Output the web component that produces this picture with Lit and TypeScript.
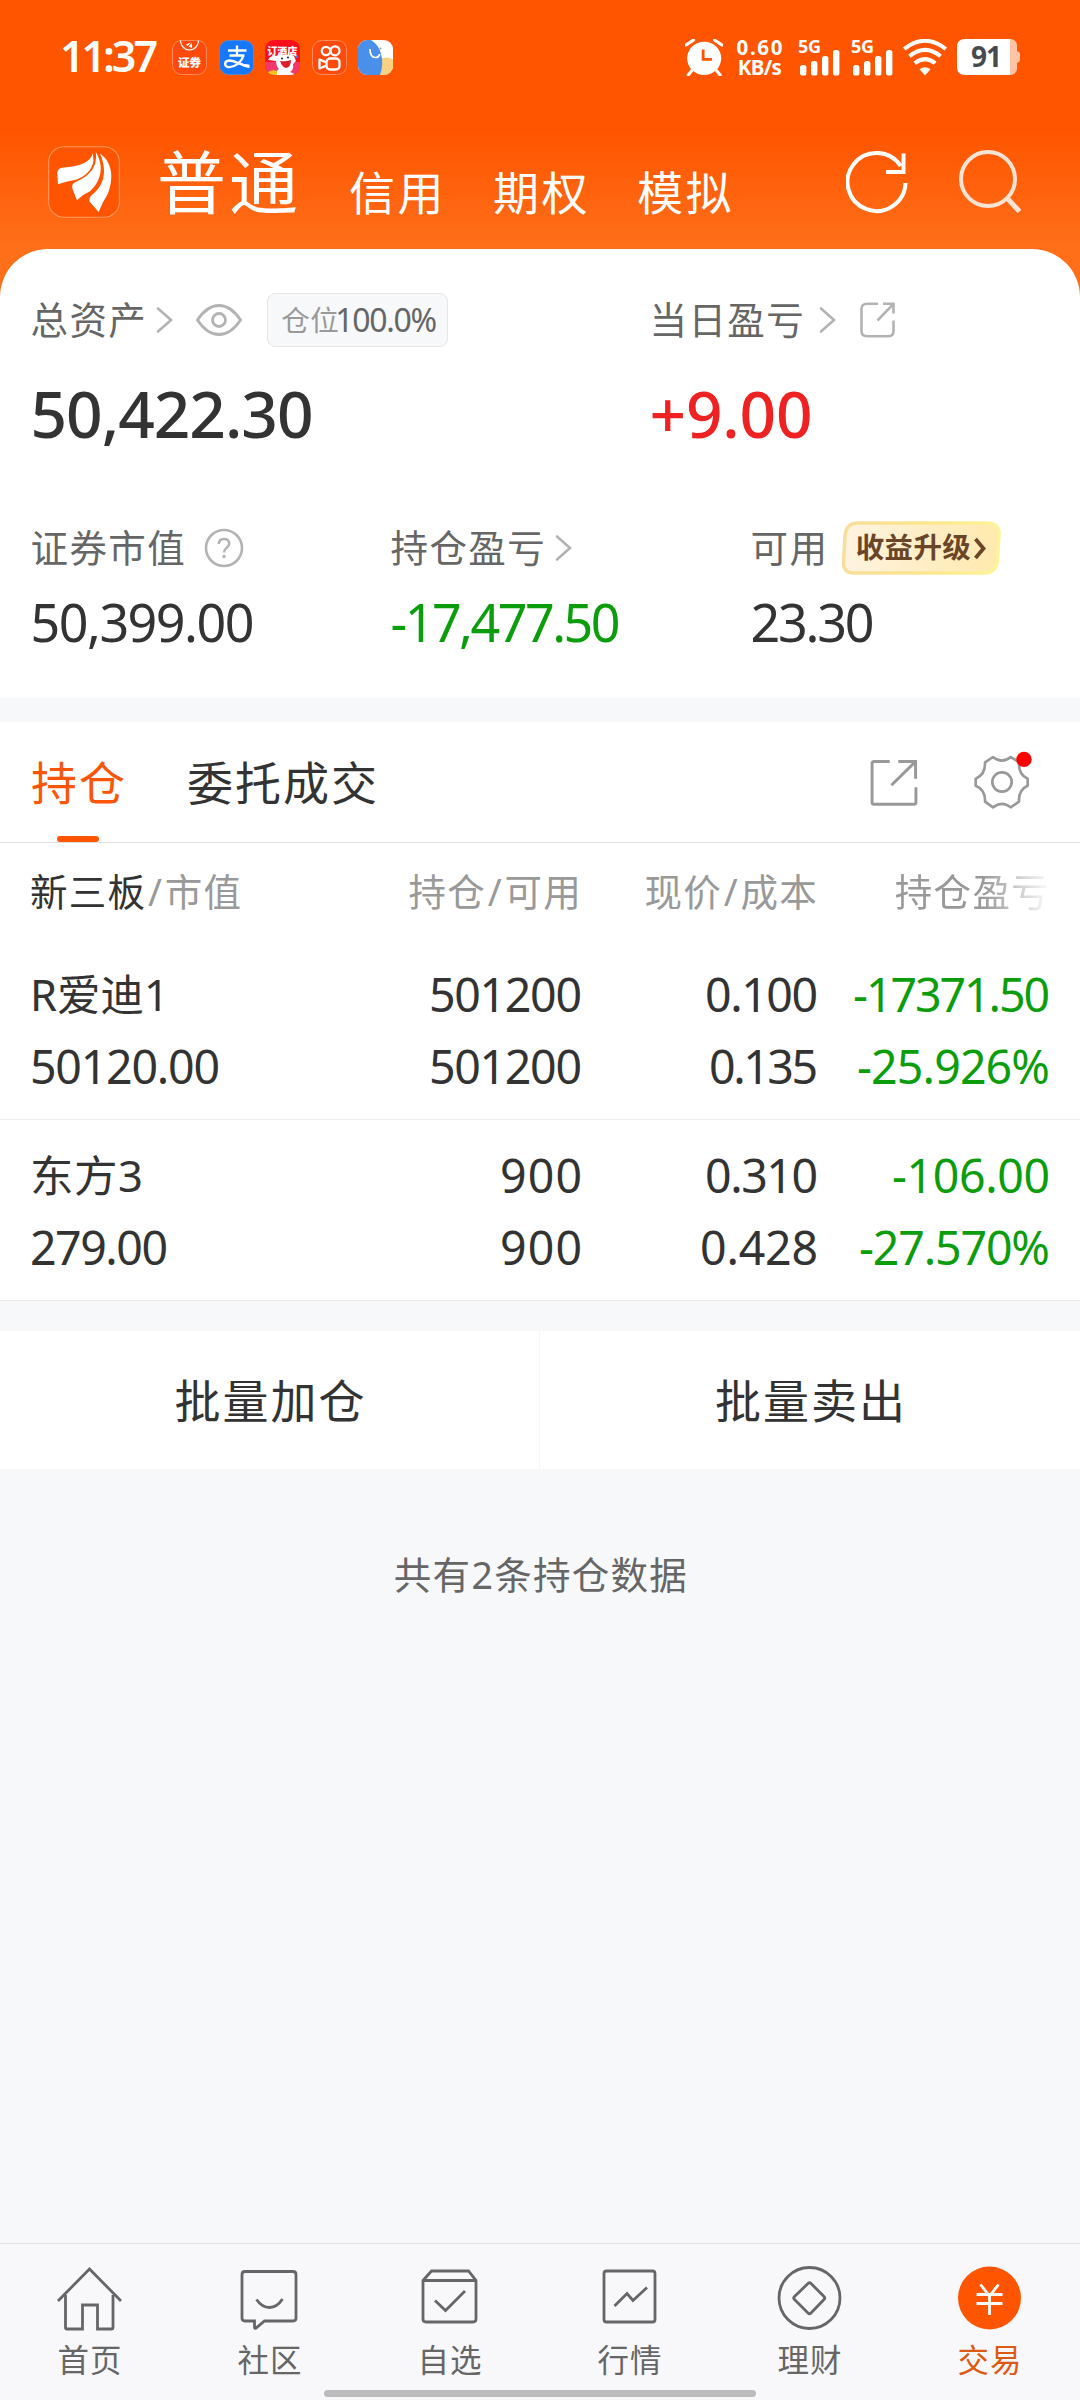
import { LitElement, html, css, svg, nothing } from "lit";
import { customElement, property } from "lit/decorators.js";

/** A single line of text whose tracking is computed so that it spans `w` pixels. */
@customElement("fit-text")
class FitText extends LitElement {
  static styles = css`
    :host { display: inline-block; white-space: nowrap; flex: none; }
    span { display: inline-block; }
  `;
  @property() text = "";
  @property({ type: Number }) w = 0;
  render() {
    return html`<span>${this.text}</span>`;
  }
  updated() {
    const span = this.renderRoot.querySelector("span") as HTMLElement;
    span.style.letterSpacing = "0px";
    const natural = span.getBoundingClientRect().width;
    span.style.letterSpacing = `${(this.w - natural) / (this.text.length - 1)}px`;
    this.style.width = `${this.w}px`;
  }
}

type Cell = [text: string, width: number];
interface Holding { name: string; nameWidth: number; value: Cell; top: Cell[]; bottom: Cell[]; }

const holdings: Holding[] = [
  {
    name: "R爱迪1", nameWidth: 139, value: ["50120.00", 190],
    top: [["501200", 153], ["0.100", 113], ["-17371.50", 197]],
    bottom: [["501200", 153], ["0.135", 109], ["-25.926%", 193]],
  },
  {
    name: "东方3", nameWidth: 113, value: ["279.00", 138],
    top: [["900", 82], ["0.310", 113], ["-106.00", 158]],
    bottom: [["900", 82], ["0.428", 118], ["-27.570%", 191]],
  },
];

const chevron = html`<svg class="chev" width="18" height="28" viewBox="0 0 18 28">
  <path d="M2 2.5 15 14 2 25.5" fill="none" stroke="#b3b3b3" stroke-width="2.6" stroke-linecap="round" /></svg>`;

const bars = svg`<rect x="0" y="15" width="6.4" height="10.5" rx="2.6"/><rect x="11" y="11" width="6.4" height="14.5" rx="2.6"/><rect x="22" y="6" width="6.4" height="19.5" rx="2.6"/><rect x="33" y="0" width="6.4" height="25.5" rx="2.6"/>`;

const tabIcons = [
  svg`<path d="M2 36 33.500 4 65 36"/><path d="M9.500 30v32.500q0 1.500 1.500 1.500h15.500v-24h15v24h14q1.500 0 1.500-1.500V30"/>`,
  svg`<path d="M9 6.500h48q3 0 3 3v43.500q0 3-3 3H28.500l-8.500 7q-1.500 1-1.500-1v-6H9q-3 0-3-3V9.500q0-3 3-3Z"/><path d="M20.500 34.500q5.500 8 13 8t13-8.500"/>`,
  svg`<path d="M7 15.500 15.500 6h37L60 15.500V54q0 3-3 3H10q-3 0-3-3ZM7 15.500h53M19 35.500l10.500 10L49 26"/>`,
  svg`<rect x="8" y="6" width="51" height="51" rx="2.500"/><path d="M18.500 41 31 28.500l6 7L51 22.500"/>`,
  svg`<circle cx="33.500" cy="33" r="30.500"/><path d="M32 18.500q1.500-1.500 3 0L48 31.500q1.500 1.500 0 3L35 48q-1.500 1.500-3 0L18.500 34.500q-1.500-1.500 0-3Z"/>`,
  svg`<circle cx="33.500" cy="33" r="31.500" fill="#ff5500" stroke="none"/><path stroke="#fff" d="M24.500 19.500 33.500 31 42.500 19.500M20.500 29.500h26M20.500 38.500h26M33.500 30v20"/>`,
];
const tabs = ["首页", "社区", "自选", "行情", "理财", "交易"];

@customElement("app-root")
class AppRoot extends LitElement {
  static styles = css`
    :host {
      display: flex; flex-direction: column; width: 1080px; height: 2400px; overflow: hidden;
      background: #f7f8fa; color: #333;
      font-family: "Noto Sans", "Noto Sans CJK SC", sans-serif;
    }
    * { box-sizing: border-box; }
    svg { display: block; flex: none; }

    .top { height: 300px; flex: none; background: linear-gradient(#ff5500 130px, #ff6f1a 250px); color: #fff; }
    .status { height: 114px; padding: 0 60px; display: flex; align-items: center; }
    .clock { font-size: 43px; font-weight: 600; line-height: 60px; margin-right: 14px; margin-top: -2px; }
    .apps { display: flex; gap: 11.500px; }
    .sys { margin-left: auto; display: flex; align-items: center; }
    .speed { width: 47px; margin: 0 14px 0 13px; font-size: 20.500px; font-weight: 700; line-height: 20px; text-align: center; }
    .speed div { display: flex; justify-content: center; }
    .sig { position: relative; width: 43px; height: 37px; margin-right: 10px; }
    .sig svg { position: absolute; left: 3px; bottom: 0; }
    .sig span { position: absolute; left: 1px; top: -2px; font-size: 18px; line-height: 18px; font-weight: 700; letter-spacing: -0.4px; }
    .battery { position: relative; width: 63px; height: 36px; margin-left: 10px; }
    .battery span { position: absolute; left: 0; top: 0; width: 58px; text-align: center; font-size: 28px; font-weight: 700; line-height: 35px; letter-spacing: -1px; color: #484b4e; }

    .nav { height: 135px; padding: 0 58px 0 48px; display: flex; align-items: center; }
    .nav .cur { font-size: 69px; letter-spacing: 3px; line-height: 90px; margin-left: 37px; }
    .nav .alt { font-size: 46px; letter-spacing: 2.500px; line-height: 60px; margin-top: 20px; }
    .nav .cur + .alt { margin-left: 48px; }
    .nav .alt + .alt { margin-left: 47px; }
    .nav .refresh { margin-left: auto; margin-right: 49px; }

    .summary { height: 449px; flex: none; margin-top: -51px; background: #fff; border-radius: 48px 48px 0 0; padding: 41px 0 0 30.500px; }
    .line { display: grid; grid-template-columns: 360px 360px 1fr; align-items: center; height: 60px; line-height: 60px; }
    .line.two { grid-template-columns: 619px 1fr; }
    .lab { display: flex; align-items: center; font-size: 37.500px; letter-spacing: 1.400px; color: #666; }
    .lab .chev { margin-left: 9px; }
    .lab.day .chev { margin-left: 14px; }
    .ico { margin-left: 22px; }
    .day .ico { margin-left: 18px; }
    .help { margin-left: 18px; }
    .pos { margin-left: 25px; width: 181px; height: 54px; border: 1px solid #e6e6e8; border-radius: 8px; background: #f7f8fa;
      padding-left: 13px; display: flex; align-items: center; font-size: 28.500px; line-height: 52px; letter-spacing: .5px; color: #999; }
    .pos fit-text { font-size: 32px; color: #666; margin-left: -4px; }
    .big { height: 80px; line-height: 80px; margin-top: 24px; font-size: 64px; font-weight: 500; }
    .gap { margin-top: 64px; }
    .mid { margin-top: 14px; font-size: 52px; }
    .red { color: #ee2222; }
    .green { color: #0b9d0b; }
    .promo { position: relative; margin-left: 14px; width: 160px; height: 54px; }
    .promo svg { position: absolute; inset: 0; }
    .promo span { position: absolute; left: 13.500px; top: 0; font-size: 28.500px; line-height: 52px; letter-spacing: .3px; font-weight: 700; color: #6b4528; }

    .strip { height: 24px; flex: none; }
    .tabs { height: 121px; flex: none; background: #fff; border-bottom: 1px solid #dfdfdf; padding: 0 47px 0 31px; display: flex; align-items: center;
      font-size: 46px; letter-spacing: 2px; line-height: 120px; }
    .tab { position: relative; height: 120px; margin-right: 60px; }
    .tab.on { color: #fb5607; }
    .tab.on::after { content: ""; position: absolute; left: 26px; bottom: 0; width: 42px; height: 6px; border-radius: 3px; background: #ff5500; }
    .tabs .share { margin-left: auto; margin-right: 55px; }

    .table { flex: none; background: #fff; }
    .tr { display: grid; grid-template-columns: 300px 252px 236px 232px; padding: 0 30px; }
    .tr > * { display: flex; justify-content: flex-end; }
    .tr > :first-child { justify-content: flex-start; }
    .th { height: 96px; padding-top: 3px; font-size: 37.500px; letter-spacing: 1.300px; line-height: 91px; color: #999; position: relative; }
    .th b { font-weight: 400; color: #333; }
    .th i { font-style: normal; margin: 0 1.500px; }
    .th .c4 { -webkit-mask-image: linear-gradient(to right, #000 165px, transparent 234px); mask-image: linear-gradient(to right, #000 165px, transparent 234px); }
    .row { height: 181px; padding-top: 18.500px; border-bottom: 1px solid #ececec; font-size: 46.500px; line-height: 72px; }
    .name { font-size: 43.500px; }

    .acts { margin-top: 30px; height: 138px; flex: none; background: #fff; display: grid; grid-template-columns: 1fr 1fr; font-size: 46px; letter-spacing: 2px; line-height: 138px; text-align: center; }
    .acts div { padding-left: 2px; }
    .acts div:first-child { border-right: 1px solid #f6f6f7; }
    .note { margin-top: 76px; padding-left: 2px; text-align: center; font-size: 37.500px; letter-spacing: 1.300px; line-height: 60px; color: #666; }

    .bar { margin-top: auto; height: 157px; flex: none; background: #f8f8fb; border-top: 1px solid #e3e3e6; position: relative; display: grid; grid-template-columns: repeat(6, 1fr); }
    .item { display: flex; flex-direction: column; align-items: center; padding-top: 21px; font-size: 31.500px; letter-spacing: 1px; line-height: 44px; color: #666; }
    .item svg { margin: 0 2px 7px 0; }
    .item.on { color: #dd5a12; }
    .home { position: absolute; left: 324px; bottom: 3px; width: 432px; height: 7px; border-radius: 4px; background: #bcbcbc; }
  `;

  private signal() {
    return html`<div class="sig"><span>5G</span><svg width="40" height="26" viewBox="0 0 40 26" fill="#fff">${bars}</svg></div>`;
  }

  private statusBar() {
    return html`<div class="status">
      <fit-text class="clock" text="11:37" .w=${98}></fit-text>
      <div class="apps">
        <svg width="35" height="35" viewBox="0 0 35 35">
          <rect x=".5" y=".5" width="34" height="34" rx="9" fill="#ff4a0d" stroke="#ff8a5c"/>
          <path d="M8.500.5a9 9.500 0 0 0 18 0" fill="none" stroke="#fff" stroke-width="1.200"/>
          <path d="M14 4.500 19 2.500 15.500 6ZM16.500 6.500 20 3v5Z" fill="#fff"/>
          <text x="17.500" y="26.500" font-size="11.500" font-weight="900" fill="#fff" text-anchor="middle" font-family="Noto Sans CJK SC">证券</text>
        </svg>
        <svg width="35" height="35" viewBox="0 0 35 35">
          <rect x=".5" y=".5" width="34" height="34" rx="9" fill="#1677ff" stroke="#5c86c8"/>
          <path d="M9 10.500h18.500M18 5.500v10M10.500 15.500h15M24.500 15.500C22 23 15 28 9 27c-4-.8-4-6 1-6.500 5-.400 11 4.500 19.500 5.500" fill="none" stroke="#fff" stroke-width="2.300"/>
          <path d="M20 22.500q5 2.200 10.500 2.200v3.200q-6-.500-11-3.600Z" fill="#fff"/>
        </svg>
        <svg width="35" height="35" viewBox="0 0 35 35">
          <defs><clipPath id="r"><rect width="35" height="35" rx="9"/></clipPath></defs>
          <g clip-path="url(#r)"><rect width="35" height="35" fill="#fb0f1c"/><rect y="22" width="35" height="13" fill="#f0386c"/>
          <path d="M3 20q3-5 8-4 4-3 10-1 5-1 8 1l2 5-3 3q1 6-3 8 4 1 5 3H12q-1-5 2-6-3-3-3-8Z" fill="#fff"/>
          <path d="M15 21q6 1 11-1 0 7-5 8-4-1-6-7Z" fill="#d8202c"/><circle cx="17" cy="18.500" r="1" fill="#222"/><circle cx="23" cy="17.500" r="1" fill="#222"/>
          <path d="M3 32q4-3 9-1v4H4Z" fill="#ffc21c"/><circle cx="31.500" cy="16.500" r="1.600" fill="#4a7be0"/></g>
          <text x="17.300" y="14.800" font-size="10" font-weight="900" fill="#fff" text-anchor="middle" font-family="Noto Sans CJK SC">订酒店</text>
        </svg>
        <svg width="35" height="35" viewBox="0 0 35 35">
          <rect x=".5" y=".5" width="34" height="34" rx="9" fill="#ff4a0d" stroke="#ff8a5c"/>
          <g fill="none" stroke="#fff" stroke-width="2.300"><circle cx="14" cy="11" r="4.200"/><circle cx="23" cy="10.800" r="4.500"/>
          <rect x="14.500" y="18.500" width="13" height="11" rx="3.500"/><path d="M14.500 22.500 7.500 19.500v9l7-3" stroke-linejoin="round"/></g>
        </svg>
        <svg width="35" height="35" viewBox="0 0 35 35">
          <defs><clipPath id="b"><rect width="35" height="35" rx="9"/></clipPath></defs>
          <g clip-path="url(#b)"><rect width="35" height="35" fill="#fff"/><circle cx="28.500" cy="29" r="11.500" fill="#f8d283"/>
          <path d="M0 0h13q8 5 10 14 3 10-1 21H0Z" fill="#4a90ea"/>
          <path d="M12 9q0 8.500 5.500 8.500 3.500 0 4.200-3.500" fill="none" stroke="#fff" stroke-width="1.700"/><circle cx="22.500" cy="8.500" r="1" fill="#99a"/></g>
        </svg>
      </div>
      <div class="sys">
        <svg width="38" height="37" viewBox="421 117 107 109" preserveAspectRatio="none">
          <ellipse cx="475" cy="174" rx="48" ry="49" fill="#fff"/>
          <path d="M424 135 445 120M525 135 504 120M440 210 430 223M510 210 520 223" stroke="#fff" stroke-width="9" stroke-linecap="round"/>
          <path d="M472 148v29h25" fill="none" stroke="#ff5500" stroke-width="8"/>
        </svg>
        <div class="speed"><div><fit-text text="0.60" .w=${46}></fit-text></div><div><fit-text text="KB/s" .w=${44}></fit-text></div></div>
        ${this.signal()}${this.signal()}
        <svg width="44" height="37" viewBox="0 0 44 37" fill="none" stroke="#fff" stroke-width="4">
          <path d="M1.200 10Q22-6.500 42.800 10M6.500 17.200Q22 4.500 37.500 17.200M11.800 24.200Q22 16 32.200 24.200"/>
          <path d="M22 36.500 16.500 30.200Q22 26.500 27.500 30.200Z" fill="#fff" stroke="none"/>
        </svg>
        <div class="battery">
          <svg width="63" height="36" viewBox="0 0 63 36"><path d="M53 0h1q5.500 1 6 6v6q3 1 3 3v6q0 2-3 3v6q-.5 5-6 6h-1Z" fill="#ffc4a6"/>
          <path d="M8 0H53V36H8Q0 36 0 28V8Q0 0 8 0Z" fill="#fff"/></svg><span>91</span>
        </div>
      </div>
    </div>`;
  }

  private nav() {
    return html`<div class="nav">
      <svg width="72" height="72" viewBox="139 435 209 216" preserveAspectRatio="none">
        <rect x="141" y="437" width="205" height="212" rx="45" fill="#ff5500" stroke="#ff9a66" stroke-width="3"/>
        <g fill="#fff">
        <path d="M269 457C262 485 232 497 180 500Q167 502 166 516L168 550Q195 539 220 536 264 520 271 480Z"/>
        <path d="M278 454C282 500 262 524 214 546Q206 552 211 566L223 598Q240 580 262 570C298 536 300 490 278 454Z"/>
        <path d="M290 458C312 510 302 554 266 582Q257 590 260 602L286 633Q298 602 312 580C332 530 324 480 290 458Z"/></g>
      </svg>
      <span class="cur">普通</span><span class="alt">信用</span><span class="alt">期权</span><span class="alt">模拟</span>
      <svg class="refresh" width="64" height="64" viewBox="0 0 64 64" fill="none" stroke="#fff" stroke-width="4">
        <path d="M59.500 33a29 29 0 1 1-4.800-17M57.500 3.500V22H40"/></svg>
      <svg width="63" height="64" viewBox="0 0 63 64" fill="none" stroke="#ffe4d6" stroke-width="4">
        <circle cx="29" cy="29" r="27"/><path d="M48 48 60.500 61.500" stroke-width="5"/></svg>
    </div>`;
  }

  private summary() {
    return html`<div class="summary">
      <div class="line two">
        <div class="lab">总资产${chevron}
          <svg class="ico" width="46" height="32" viewBox="0 0 46 32" fill="none" stroke="#b3b3b3" stroke-width="2.800"><path d="M1.500 16Q11 1.500 23 1.500T44.500 16Q35 30.500 23 30.500T1.500 16Z"/><circle cx="23" cy="16" r="6.500"/></svg>
          <div class="pos">仓位<fit-text text="100.0%" .w=${102}></fit-text></div>
        </div>
        <div class="lab day">当日盈亏${chevron}
          <svg class="ico" width="46" height="36" viewBox="-5 0 46 36" fill="none" stroke="#b3b3b3" stroke-width="2.600"><path d="M18 1.800H7Q1.500 1.800 1.500 7v22q0 5.200 5.500 5.200h21.500q5 0 5-5.200V18.500M23 1.800h10.500V11.500M33 2.300 17.500 18.500"/></svg>
        </div>
      </div>
      <div class="line two big"><fit-text text="50,422.30" .w=${283}></fit-text><fit-text class="red" text="+9.00" .w=${163}></fit-text></div>
      <div class="line gap">
        <div class="lab">证券市值
          <svg class="help" width="40" height="40" viewBox="0 0 40 40" fill="none" stroke="#b3b3b3" stroke-width="2.600"><circle cx="20" cy="20" r="18"/><path d="M14.800 16Q15 11 20 11t5.200 4.500q0 2.500-2.700 4.500Q20 21.800 20 24.500"/><circle cx="20" cy="28.500" r="1" fill="#b3b3b3" stroke-width="1.500"/></svg>
        </div>
        <div class="lab">持仓盈亏${chevron}</div>
        <div class="lab">可用
          <div class="promo"><svg width="160" height="54" viewBox="0 0 160 54">
            <defs><linearGradient id="pf" x1="0" x2="1"><stop stop-color="#fef3e0"/><stop offset="1" stop-color="#ffe9ad"/></linearGradient>
            <linearGradient id="ps" x1="0" x2="1"><stop stop-color="#f9dd9a"/><stop offset=".5" stop-color="#fae58e"/><stop offset="1" stop-color="#fdf49a"/></linearGradient></defs>
            <path d="M16 2h128q13.500 0 13 11l-1.500 25q-.5 14-13.500 14H12Q1 52 1.500 41L3 15Q4 2 16 2Z" fill="url(#pf)" stroke="url(#ps)" stroke-width="3.500"/>
            <path d="M133.500 18l8 9.500-8 9.500" fill="none" stroke="#6b4528" stroke-width="3.800"/></svg><span>收益升级</span></div>
        </div>
      </div>
      <div class="line mid">
        <fit-text text="50,399.00" .w=${224}></fit-text>
        <fit-text class="green" text="-17,477.50" .w=${230}></fit-text>
        <fit-text text="23.30" .w=${124}></fit-text>
      </div>
    </div>`;
  }

  private holdings() {
    return html`<div class="tabs">
      <div class="tab on">持仓</div><div class="tab">委托成交</div>
      <svg class="share" width="48" height="48" viewBox="33 54 139 139" fill="none" stroke="#999" stroke-width="8.500">
        <path d="M90 64H45Q39 64 39 70V182Q39 188 45 188H160Q166 188 166 182V139M115 64H165V114M163 66 95 133"/></svg>
      <svg width="60" height="66" viewBox="340 28 180 198" fill="none" stroke="#999" stroke-width="8">
        <path stroke-linejoin="round" d="M400 52Q427 74 453 52L478 68Q476 105 504 117V138Q476 150 478 186L453 203Q427 182 400 203L376 186Q378 150 348 138V117Q378 105 376 68Z"/>
        <circle cx="427" cy="127" r="29"/><circle cx="493" cy="59" r="23" fill="#f00" stroke="none"/></svg>
    </div>
    <div class="table">
      <div class="tr th">
        <div><b>新三板</b><i>/</i>市值</div><div>持仓<i>/</i>可用</div><div>现价<i>/</i>成本</div><div class="c4">持仓盈亏</div>
      </div>
      ${holdings.map((h) => html`<div class="row">
        <div class="tr"><div><fit-text class="name" text=${h.name} .w=${h.nameWidth}></fit-text></div>
          ${h.top.map(([t, w], i) => html`<div class=${i === 2 ? "green" : nothing}><fit-text text=${t} .w=${w}></fit-text></div>`)}</div>
        <div class="tr"><div><fit-text text=${h.value[0]} .w=${h.value[1]}></fit-text></div>
          ${h.bottom.map(([t, w], i) => html`<div class=${i === 2 ? "green" : nothing}><fit-text text=${t} .w=${w}></fit-text></div>`)}</div>
      </div>`)}
    </div>`;
  }

  render() {
    return html`
      <div class="top">${this.statusBar()}${this.nav()}</div>
      ${this.summary()}
      <div class="strip"></div>
      ${this.holdings()}
      <div class="acts"><div>批量加仓</div><div>批量卖出</div></div>
      <div class="note">共有2条持仓数据</div>
      <div class="bar">
        ${tabs.map((t, i) => html`<div class="item ${i === 5 ? "on" : ""}">
          <svg width="67" height="66" viewBox="0 0 67 66" fill="none" stroke="#666" stroke-width="2.800">${tabIcons[i]}</svg>${t}</div>`)}
        <div class="home"></div>
      </div>`;
  }
}
